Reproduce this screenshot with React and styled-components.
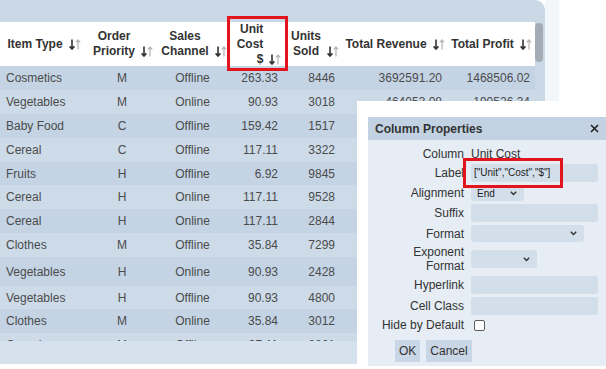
import styled, { createGlobalStyle } from "styled-components";

const GlobalStyle = createGlobalStyle`
  body {
    margin: 0;
    background: #ffffff;
    font-family: "Liberation Sans", Arial, sans-serif;
  }
`;

const columns = [
  { key: "type", label: ["Item Type"], width: 88, align: "left", pad: "0 0 0 6px" },
  { key: "priority", label: ["Order", "Priority"], width: 70, align: "center", pad: "0 2px 0 0" },
  { key: "channel", label: ["Sales", "Channel"], width: 72, align: "center", pad: "0 3px 0 0" },
  { key: "cost", label: ["Unit", "Cost", "$"], width: 58, align: "right", pad: "0 10px 0 0", headAlign: "right" },
  { key: "sold", label: ["Units", "Sold"], width: 54, align: "right", pad: "0 7px 0 0" },
  { key: "revenue", label: ["Total Revenue"], width: 106, align: "right", pad: "0 6px 0 0" },
  { key: "profit", label: ["Total Profit"], width: 87, align: "right", pad: "0 5px 0 0" },
];

const rows = [
  ["Cosmetics", "M", "Offline", "263.33", "8446", "3692591.20", "1468506.02"],
  ["Vegetables", "M", "Online", "90.93", "3018", "464053.08", "190526.34"],
  ["Baby Food", "C", "Offline", "159.42", "1517", "387002.20", "145419.91"],
  ["Cereal", "C", "Offline", "117.11", "3322", "680830.68", "291268.96"],
  ["Fruits", "H", "Offline", "6.92", "9845", "91077.55", "23037.30", 23],
  ["Cereal", "H", "Online", "117.11", "9528", "1952734.18", "835413.60"],
  ["Cereal", "H", "Online", "117.11", "2844", "582864.12", "249301.08"],
  ["Clothes", "M", "Offline", "35.84", "7299", "796467.60", "534853.72"],
  ["Vegetables", "H", "Online", "90.93", "2428", "373396.02", "152618.08", 29],
  ["Vegetables", "H", "Offline", "90.93", "4800", "738240.00", "301632.00", 23],
  ["Clothes", "M", "Online", "35.84", "3012", "328668.00", "220710.12"],
  ["Cereal", "M", "Offline", "37.11", "6661", "780066.21", "333665.11"],
];

function SortArrows() {
  return (
    <Arrows width="12" height="11" viewBox="0 0 12 11">
      <path d="M3 0.5V10M0.6 7.4L3 10L5.4 7.4" stroke="#333" strokeWidth="1.6" fill="none" />
      <path d="M9 1V10.5M6.8 3.4L9 1L11.2 3.4" stroke="#b3b3b3" strokeWidth="1.2" fill="none" />
    </Arrows>
  );
}

function Chevron() {
  return (
    <svg width="7" height="5" viewBox="0 0 7 5">
      <path d="M0.8 0.8L3.5 3.6L6.2 0.8" stroke="#333" strokeWidth="1.4" fill="none" />
    </svg>
  );
}

export default function App() {
  return (
    <Page>
      <GlobalStyle />
      <TablePanel>
        <TopStrip />
        <ScrollArea>
          <TableWrap>
            <Table>
              <colgroup>
                {columns.map((c) => (
                  <col key={c.key} style={{ width: c.width }} />
                ))}
              </colgroup>
              <thead>
                <tr>
                  {columns.map((c) => (
                    <HeadCell key={c.key}>
                      <HeadBox>
                        <HeadInner>
                          <HeadText $align={c.headAlign || "center"}>
                            {c.label.map((line, i) => (
                              <div key={i}>{line}</div>
                            ))}
                          </HeadText>
                          <SortArrows />
                        </HeadInner>
                      </HeadBox>
                    </HeadCell>
                  ))}
                </tr>
              </thead>
              <tbody>
                {rows.map((r, i) => (
                  <Row key={i} $odd={i % 2 === 0} $h={r[7] || 24}>
                    {columns.map((c, j) => (
                      <Cell key={c.key} $align={c.align} $pad={c.pad}>
                        {r[j]}
                      </Cell>
                    ))}
                  </Row>
                ))}
              </tbody>
            </Table>
          </TableWrap>
          <ScrollTrack>
            <Thumb />
          </ScrollTrack>
        </ScrollArea>
        <Footer />
      </TablePanel>
      <Gutter />

      <Highlight $x={227} $y={16} $w={61} $h={55} />

      <Overlay>
        <Dialog>
          <TitleBar>
            <Title>Column Properties</Title>
            <svg width="9" height="9" viewBox="0 0 9 9">
              <path d="M1 1L8 8M8 1L1 8" stroke="#222" strokeWidth="1.6" />
            </svg>
          </TitleBar>
          <Body>
            <Form>
              <Label>Column</Label>
              <Value>Unit Cost</Value>
              <Label>Label</Label>
              <Input>["Unit","Cost","$"]</Input>
              <Label>Alignment</Label>
              <Select $w={53} $h={16}>
                End
                <Chevron />
              </Select>
              <Label>Suffix</Label>
              <Input />
              <Label>Format</Label>
              <Select $w={113} $h={17}>
                <span />
                <Chevron />
              </Select>
              <Label>
                Exponent
                <br />
                Format
              </Label>
              <Select $w={66} $h={18}>
                <span />
                <Chevron />
              </Select>
              <Label>Hyperlink</Label>
              <Input />
              <Label>Cell Class</Label>
              <Input />
              <Label>Hide by Default</Label>
              <Checkbox />
            </Form>
            <Buttons>
              <Button>OK</Button>
              <Button>Cancel</Button>
            </Buttons>
          </Body>
        </Dialog>
        <Highlight $x={106} $y={57} $w={100} $h={30} />
      </Overlay>
    </Page>
  );
}

const Page = styled.div`
  position: relative;
  width: 606px;
  height: 369px;
  overflow: hidden;
  display: flex;
  align-items: flex-start;
`;

const TablePanel = styled.div`
  width: 545px;
  height: 364px;
  background: #cbd9e7;
  border-top-right-radius: 10px;
  display: flex;
  flex-direction: column;
  overflow: hidden;
`;

const TopStrip = styled.div`
  height: 22px;
  flex: none;
`;

const ScrollArea = styled.div`
  height: 319px;
  flex: none;
  display: flex;
  overflow: hidden;
`;

const TableWrap = styled.div`
  width: 535px;
  height: 319px;
  overflow: hidden;
`;

const Table = styled.table`
  width: 535px;
  table-layout: fixed;
  border-collapse: collapse;
  border-spacing: 0;
`;

const HeadCell = styled.th`
  height: 44px;
  padding: 0;
  background: #ffffff;
  vertical-align: middle;
`;

const HeadBox = styled.div`
  height: 44px;
  display: flex;
  align-items: center;
  justify-content: center;
  overflow: visible;
`;

const HeadInner = styled.div`
  display: flex;
  align-items: flex-end;
  font-size: 12px;
  font-weight: bold;
  line-height: 15px;
  color: #333333;
`;

const HeadText = styled.div`
  text-align: ${(p) => p.$align};
`;

const Arrows = styled.svg`
  flex: none;
  margin: 0 0 2px 6px;
`;

const Row = styled.tr`
  height: ${(p) => p.$h}px;
  background: ${(p) => (p.$odd ? "#c4d4e5" : "#cddbe9")};
`;

const Cell = styled.td`
  padding: ${(p) => p.$pad};
  text-align: ${(p) => p.$align};
  font-size: 12px;
  line-height: 14px;
  color: #4b4b4b;
  white-space: nowrap;
  overflow: hidden;
`;

const ScrollTrack = styled.div`
  width: 10px;
  padding-top: 1px;
`;

const Thumb = styled.div`
  width: 8px;
  height: 39px;
  background: #a3abb4;
  border-radius: 4px;
`;

const Footer = styled.div`
  height: 23px;
  flex: none;
  background: #d5e1ed;
`;

const Gutter = styled.div`
  width: 14px;
  height: 369px;
  background: #f4f7fa;
`;

const Highlight = styled.div`
  position: absolute;
  left: ${(p) => p.$x}px;
  top: ${(p) => p.$y}px;
  width: ${(p) => p.$w}px;
  height: ${(p) => p.$h}px;
  box-sizing: border-box;
  border: 3px solid #e3141c;
  pointer-events: none;
`;

const Overlay = styled.div`
  position: absolute;
  left: 357px;
  top: 101px;
  width: 249px;
  height: 268px;
  box-sizing: border-box;
  padding: 16px 0 0 11px;
  background: #ffffff;
`;

const Dialog = styled.div`
  width: 238px;
  height: 249px;
  background: #e6edf5;
  display: flex;
  flex-direction: column;
`;

const TitleBar = styled.div`
  height: 23px;
  flex: none;
  padding: 0 7px;
  background: #c2d2e3;
  display: flex;
  align-items: center;
  justify-content: space-between;
`;

const Title = styled.div`
  font-size: 12px;
  font-weight: bold;
  color: #333333;
`;

const Body = styled.div`
  padding: 7px 8px 0 0;
`;

const Form = styled.div`
  display: grid;
  grid-template-columns: 96px 1fr;
  column-gap: 7px;
  row-gap: 3px;
  align-items: center;
`;

const Label = styled.div`
  text-align: right;
  font-size: 12px;
  line-height: 14px;
  color: #333333;
`;

const Value = styled.div`
  font-size: 12px;
  line-height: 14px;
  color: #333333;
`;

const Input = styled.div`
  height: 18px;
  box-sizing: border-box;
  padding: 0 3px;
  background: #d2deea;
  border-radius: 3px;
  font-size: 10px;
  line-height: 18px;
  color: #222222;
`;

const Select = styled.div`
  width: ${(p) => p.$w}px;
  height: ${(p) => p.$h}px;
  box-sizing: border-box;
  padding: 0 7px 0 6px;
  background: #d2deea;
  border-radius: 3px;
  display: flex;
  align-items: center;
  justify-content: space-between;
  font-size: 10px;
  color: #222222;
`;

const Checkbox = styled.div`
  width: 11px;
  height: 11px;
  box-sizing: border-box;
  margin-left: 3px;
  border: 1px solid #5f5f5f;
  border-radius: 2px;
  background: #ffffff;
`;

const Buttons = styled.div`
  display: flex;
  gap: 6px;
  margin-top: 8px;
  padding-left: 27px;
`;

const Button = styled.div`
  height: 22px;
  padding: 0 4px;
  background: #c8d6e5;
  font-size: 12px;
  line-height: 22px;
  color: #333333;
`;
